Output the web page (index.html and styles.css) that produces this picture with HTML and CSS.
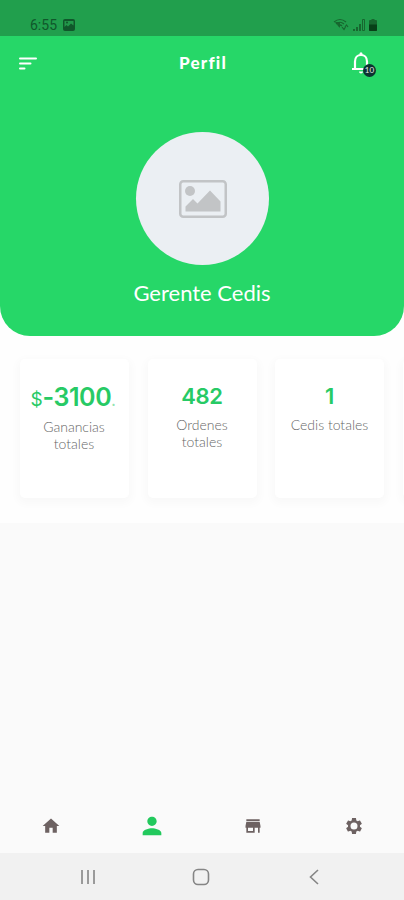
FILE: index.html
```html
<!DOCTYPE html>
<html lang="es">
<head>
  <meta charset="UTF-8" />
  <meta name="viewport" content="width=device-width, initial-scale=1" />
  <title>Perfil</title>
  <link rel="stylesheet" href="styles.css">
</head>
<body>

<div class="status-bar">
  <div class="status-left">
    <span>6:55</span>
    <svg width="12" height="12" viewBox="0 0 12 12"><rect width="12" height="12" rx="2" fill="#10572b"/><path d="M1.500 2h9v4.500L8 4.500 5 7.500 3.500 6 1.500 8z" fill="#22974a"/><circle cx="4" cy="3.500" r="1" fill="#10572b"/></svg>
  </div>
  <div class="status-right">
    <svg width="16" height="13" viewBox="0 0 16 13" fill="none" stroke="#17672f" stroke-width="1.200"><path d="M1 4q6-5 12 0M3 6q4-3.500 8 0M5 8q2-2 4 0"/><path d="M7 4v6L2 4z" fill="#17672f" stroke="none"/><path d="m9 9 2 2.500L12.500 9M12 9l1.500-2L15 9"/></svg>
    <svg width="12" height="12" viewBox="0 0 12 12" fill="#17672f"><path d="M0 10h2v2H0zM3 8h2v4H3zM6 5h2v7H6z"/><path d="M9.500.500h2v11h-2z" fill="none" stroke="#17672f"/></svg>
    <svg width="8" height="12" viewBox="0 0 8 12"><path d="M2.500 0h3v1H7q1 0 1 1v9q0 1-1 1H1q-1 0-1-1V2q0-1 1-1h1.500z" fill="#17672f"/><path d="M0 5.500h8V11q0 1-1 1H1q-1 0-1-1z" fill="#084018"/></svg>
  </div>
</div>

<header class="header">
  <div class="app-bar">
    <svg class="menu" width="18" height="13" viewBox="0 0 18 13" stroke="#fff" stroke-width="2" stroke-linecap="round"><path d="M1 1.500h16M1 6.500h10.500M1 11.500h4.500"/></svg>
    <h1>Perfil</h1>
    <div class="bell">
      <svg width="24" height="26" viewBox="0 0 24 26"><path d="M5 19V11.500C5 7.500 7.500 5 11 5s6 2.500 6 6.500V19" fill="none" stroke="#fff" stroke-width="2.200"/><path d="M2 18h18v2H2zM9.500 5V3.800a1.500 1.500 0 0 1 3 0V5zM9 21.500h4q0 2-2 2t-2-2z" fill="#fff"/></svg>
      <span class="badge">10</span>
    </div>
  </div>
  <div class="avatar">
    <svg width="48" height="38" viewBox="0 0 48 38" fill="#c2c4c6"><rect x="1.250" y="1.250" width="45.500" height="35.500" rx="3" fill="none" stroke="#c2c4c6" stroke-width="2.500"/><circle cx="11" cy="11" r="5"/><path d="M6.500 31.500v-5L14 19l4.500 4.500L31 10.500l10.500 11v10z"/></svg>
  </div>
  <h2>Gerente Cedis</h2>
</header>

<section class="stats">
  <div class="card">
    <div class="value money"><small>$</small>-3100<i>.</i></div>
    <p>Ganancias<br>totales</p>
  </div>
  <div class="card">
    <div class="value">482</div>
    <p>Ordenes<br>totales</p>
  </div>
  <div class="card">
    <div class="value">1</div>
    <p>Cedis totales</p>
  </div>
  <div class="card"></div>
</section>

<nav class="tabs">
  <div><svg width="20" height="20" viewBox="0 0 24 24"><path d="M10 20v-6h4v6h5v-8h3L12 3 2 12h3v8z"/></svg></div>
  <div class="active"><svg width="28" height="28" viewBox="0 0 24 24"><path d="M12 12c2.210 0 4-1.790 4-4s-1.790-4-4-4-4 1.790-4 4 1.790 4 4 4zm0 2c-2.670 0-8 1.340-8 4v2h16v-2c0-2.660-5.330-4-8-4z"/></svg></div>
  <div><svg width="20" height="20" viewBox="0 0 24 24"><path d="M20 4H4v2h16V4zm1 10v-2l-1-5H4l-1 5v2h1v6h10v-6h4v6h2v-6h1zm-9 4H6v-4h6v4z"/></svg></div>
  <div><svg width="20" height="20" viewBox="0 0 24 24"><path fill-rule="evenodd" d="M19.140 12.940c.040-.300.060-.610.060-.940 0-.320-.020-.640-.070-.940l2.030-1.580c.180-.140.230-.410.120-.610l-1.920-3.320c-.120-.220-.370-.290-.590-.220l-2.390.960c-.500-.380-1.030-.700-1.620-.940l-.360-2.540c-.040-.240-.240-.410-.480-.410h-3.840c-.240 0-.430.170-.470.410l-.360 2.540c-.590.240-1.130.570-1.620.940l-2.390-.960c-.220-.080-.470 0-.590.220L2.740 8.870c-.120.210-.080.470.120.610l2.030 1.580c-.050.300-.090.630-.090.940s.020.640.070.940l-2.030 1.580c-.180.140-.230.410-.120.610l1.920 3.320c.120.220.370.290.590.220l2.390-.960c.500.380 1.030.700 1.620.940l.360 2.540c.050.240.240.410.480.410h3.840c.240 0 .440-.170.470-.410l.360-2.540c.590-.240 1.130-.560 1.620-.940l2.390.960c.220.080.470 0 .590-.220l1.920-3.320c.120-.220.070-.470-.120-.610l-2.010-1.580zM12 16.200a4.200 4.200 0 1 1 0-8.400 4.200 4.200 0 0 1 0 8.400z"/></svg></div>
</nav>

<footer class="system-nav">
  <svg width="16" height="16" viewBox="0 0 16 16"><path d="M2 1v14M8 1v14M14 1v14"/></svg>
  <svg width="18" height="18" viewBox="0 0 18 18"><rect x="1.500" y="1.500" width="15" height="15" rx="4.500"/></svg>
  <svg width="16" height="16" viewBox="0 0 16 16"><path d="M12 1 4.500 8l7.500 7"/></svg>
</footer>

</body>
</html>
```

FILE: styles.css
```css
* { box-sizing: border-box; }
body {
  margin: 0; height: 900px; overflow: hidden;
  display: flex; flex-direction: column;
  font-family: Lato, sans-serif; background: #fafafa;
}
h1, h2, p { margin: 0; font-weight: normal; }
svg { display: block; }

.status-bar {
  height: 36px; flex: none; background: #219f4d; color: #10572b;
  display: flex; justify-content: space-between; align-items: flex-end;
  padding: 0 27px 4px 30px;
}
.status-left { display: flex; align-items: center; gap: 6px; font: 14px/14px Roboto, sans-serif; }
.status-left svg { margin-bottom: 1px; }
.status-right { display: flex; align-items: flex-end; gap: 4px; padding-bottom: 1px; }

.header {
  height: 300px; flex: none; background: #26d768; color: #fff;
  border-radius: 0 0 30px 30px; position: relative; z-index: 1;
  display: flex; flex-direction: column; align-items: center;
}
body::before { content: ""; position: absolute; z-index: -1; top: 300px; width: 100%; height: 223px; background: #fefefe; }
.app-bar {
  width: 100%; height: 54px; padding: 0 28px 0 19px;
  display: grid; grid-template-columns: 160px auto 1fr; align-items: center;
}
.app-bar h1 { margin-top: -1px; font-size: 17px; font-weight: 900; letter-spacing: 1.200px; }
.bell { position: relative; justify-self: end; width: 26px; height: 26px; }
.badge {
  position: absolute; right: 0; bottom: -1px; width: 13px; height: 13px;
  border-radius: 50%; background: #0d3331; color: #e1e9e8;
  font-size: 8px; line-height: 13px; text-align: center;
}
.avatar {
  width: 133px; height: 133px; margin-top: 42px; border-radius: 50%;
  background: #ebeff3; display: flex; align-items: center; justify-content: center;
}
.avatar svg { margin-left: 2px; }
.header h2 { margin-top: 14px; font-size: 22px; line-height: 28px; letter-spacing: 0; }

.stats { flex: none; height: 187px; padding: 23px 0 0 20px; display: flex; gap: 18.500px; overflow: hidden; }
.card {
  flex: 0 0 109px; height: 139px; padding-top: 23px; text-align: center;
  background: #fff; border-radius: 5px; box-shadow: 0 3px 9px 3px rgba(0, 0, 0, .022);
}
.value { color: #27ca65; font: 600 22px/28px Inter, sans-serif; letter-spacing: -.3px; }
.money { font-size: 25px; line-height: 30px; letter-spacing: -.4px; white-space: nowrap; margin: 0 -5px 0 -8px; }
.money small { font-size: 19px; font-weight: normal; }
.money i { font-size: 14px; font-style: normal; opacity: .5; }
.card p { margin-top: 6px; font-size: 14px; line-height: 17px; font-weight: 300; color: #666; }
.card .money + p { margin: 2px 1px 0 0; }

.tabs { margin-top: auto; height: 56px; padding-top: 1px; flex: none; display: grid; grid-template-columns: repeat(4, 1fr); fill: #6d6262; }
.tabs div { display: flex; align-items: center; justify-content: center; }
.tabs .active { fill: #22c95d; }

.system-nav {
  height: 47px; flex: none; background: #f1f1f1; padding: 0 82px 0 80px;
  display: flex; align-items: center; justify-content: space-between;
  fill: none; stroke: #858585; stroke-width: 1.600;
}
```
